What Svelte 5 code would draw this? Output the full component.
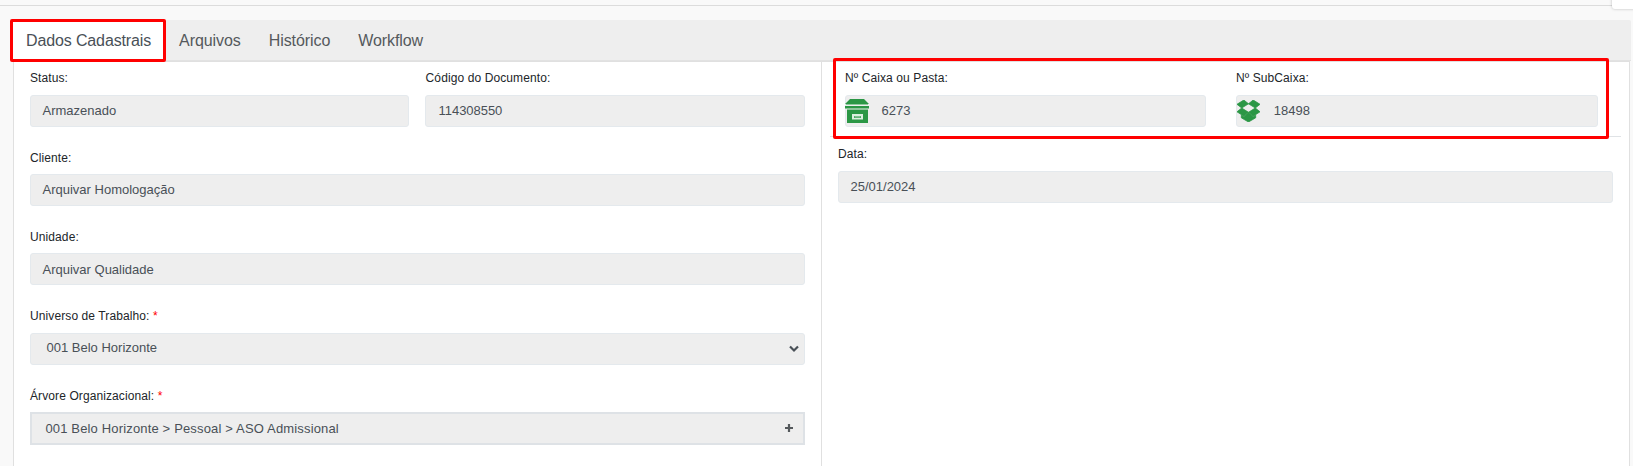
<script>
  const tabs = ['Dados Cadastrais', 'Arquivos', 'Histórico', 'Workflow'];
</script>

<div class="page">
  <div class="topbar"><div class="corner"></div></div>
  <nav class="tabs">
    {#each tabs as tab, i}
      <button class="tab" class:active={i === 0}>{tab}</button>
    {/each}
    <span class="highlight tab-highlight"></span>
  </nav>
  <main class="panel">
    <section class="left">
      <div class="row">
        <div class="field">
          <span class="label">Status:</span>
          <div class="input lower">Armazenado</div>
        </div>
        <div class="field code">
          <span class="label">Código do Documento:</span>
          <div class="input lower">114308550</div>
        </div>
      </div>
      <div class="field shift">
        <span class="label">Cliente:</span>
        <div class="input lower">Arquivar Homologação</div>
      </div>
      <div class="field shift">
        <span class="label">Unidade:</span>
        <div class="input lower">Arquivar Qualidade</div>
      </div>
      <div class="field">
        <span class="label">Universo de Trabalho: <em>*</em></span>
        <div class="input select">
          001 Belo Horizonte
          <svg width="10" height="8" viewBox="0 0 10 8"><path d="M1 1.5 5 5.5 9 1.5" fill="none" stroke="#495057" stroke-width="2.2" /></svg>
        </div>
      </div>
      <div class="field shift">
        <span class="label">Árvore Organizacional: <em>*</em></span>
        <div class="input tree">
          001 Belo Horizonte &gt; Pessoal &gt; ASO Admissional
          <svg width="8" height="8" viewBox="0 0 8 8"><path d="M0 4H8M4 0V8" stroke="#55595c" stroke-width="2.2" /></svg>
        </div>
      </div>
    </section>
    <section class="right">
      <div class="boxes">
        <div class="field">
          <span class="label">Nº Caixa ou Pasta:</span>
          <div class="input with-icon">
            <svg class="icon" width="24" height="24" viewBox="0 0 24 24">
              <path fill="#2b9745" d="M5 0H19L24 5H0ZM0 7H24V9.5H0ZM2 10.5H23V24H2Z" />
              <path fill="#8fc99d" d="M1 5H23V6H1ZM2 9.5H23V10.5H2Z" />
              <path fill="#dcefe0" fill-rule="evenodd" d="M7 15H18V20.5H7ZM9 17V19H16V17Z" />
              <path fill="#a5d2b0" d="M9.5 17.3H15.5V18.5H9.5Z" />
            </svg>
            6273
          </div>
        </div>
        <div class="field">
          <span class="label">Nº SubCaixa:</span>
          <div class="input with-icon sub">
            <svg class="icon drop" width="23" height="22" viewBox="0 0 23 22">
              <path fill="#2b9745" d="M6.8 0 11.5 3.8 4.7 8 0 4.3ZM16.2 0 23 4.3 18.3 8 11.5 3.8ZM4.7 8 11.5 12.3 6.8 16.2 0 11.8ZM18.3 8 23 11.8 16.2 16.2 11.5 12.3ZM11.5 12.8 16.3 16.8 18.7 15.2V17.8L11.5 22 4.3 17.8V15.2L6.8 16.8Z" stroke="#2b9745" stroke-width=".8" />
            </svg>
            18498
          </div>
        </div>
        <span class="highlight box-highlight"></span>
      </div>
      <div class="field date">
        <span class="label">Data:</span>
        <div class="input">25/01/2024</div>
      </div>
    </section>
  </main>
</div>

<style>
  :global(body) { margin: 0; background: #f9f9f9; }
  .page {
    box-sizing: border-box;
    width: 1633px;
    height: 466px;
    overflow: hidden;
    display: flex;
    flex-direction: column;
    background: #f9f9f9;
    font-family: "Liberation Sans", Arial, sans-serif;
  }
  .page * { box-sizing: border-box; }
  .topbar {
    position: relative;
    flex: none;
    height: 6px;
    margin-bottom: 14px;
    border-bottom: 1px solid #dcdcdc;
  }
  .corner {
    position: absolute;
    top: -10px;
    right: -10px;
    width: 31px;
    height: 19px;
    border-radius: 3px;
    background: #fff;
    box-shadow: 0 0 3px rgba(0, 0, 0, .25);
  }
  .tabs {
    position: relative;
    flex: none;
    display: flex;
    height: 41px;
    margin: 0 2px 0 13px;
    background: #eee;
    border-bottom: 1px solid #e2e2e2;
    border-radius: 2px 2px 0 0;
  }
  .tab {
    height: 41px;
    padding: 1px 14px 0 14px;
    border: 0;
    background: none;
    color: #55595c;
    font: 16px/38px "Liberation Sans", Arial, sans-serif;
    letter-spacing: -.08px;
  }
  .tab.active { background: #fff; color: #495057; padding: 1px 14px 0 13px; letter-spacing: -.13px; }
  .highlight {
    position: absolute;
    border: 3px solid #f00;
    border-radius: 2px;
    pointer-events: none;
  }
  .tab-highlight { left: -3px; top: -1px; width: 156px; height: 43px; z-index: 2; }
  .panel {
    flex: 1;
    display: flex;
    margin: 0 3px 0 13px;
    background: #fff;
    border: 1px solid #e0e0e0;
    border-bottom: 0;
  }
  .left {
    width: 808px;
    padding: 6.6px 16px 0;
    border-right: 1px solid #e0e0e0;
  }
  .row { display: grid; grid-template-columns: 379px 380px; gap: 16px; }
  .field { display: flex; flex-direction: column; gap: 8px; }
  .left .field { height: 79.33px; }
  .left .shift { padding-top: .6px; gap: 7.4px; }
  .label { font-size: 12px; line-height: 18px; height: 18px; letter-spacing: .1px; color: #212529; }
  .code .label { padding-left: .6px; }
  .label em { color: #f00; font-style: normal; }
  .input {
    position: relative;
    display: flex;
    align-items: center;
    height: 32px;
    flex: none;
    padding: 0 11.5px 2px;
    background: #eee;
    border: 1px solid #e4e9ed;
    border-radius: 3px;
    color: #495057;
    font-size: 13px;
    white-space: nowrap;
  }
  .input.lower { padding-bottom: 0; }
  .code .input { padding-left: 12.6px; letter-spacing: -.05px; }
  .select { justify-content: space-between; padding: 0 5px 2px 15.5px; }
  .select svg { position: relative; top: 1px; }
  .tree {
    justify-content: space-between;
    height: 33px;
    padding: 0 10px 0 13.4px;
    border: 2px solid #dee2e6;
    border-radius: 0;
    letter-spacing: .16px;
  }
  .right { flex: 1; padding: 7px 8px 0; }
  .boxes {
    position: relative;
    display: grid;
    grid-template-columns: 361px 362px;
    column-gap: 30px;
    height: 68px;
    padding-left: 15px;
    border-bottom: 1px solid #e0e3e6;
  }
  .with-icon { padding-left: 35.5px; }
  .with-icon.sub { padding-left: 36.8px; }
  .icon { position: absolute; left: -1px; top: 3px; }
  .icon.drop { left: 0; top: 4px; }
  .box-highlight { left: 3px; top: -11px; width: 776px; height: 81px; }
  .date { margin: 8px 8px 0; }
</style>
